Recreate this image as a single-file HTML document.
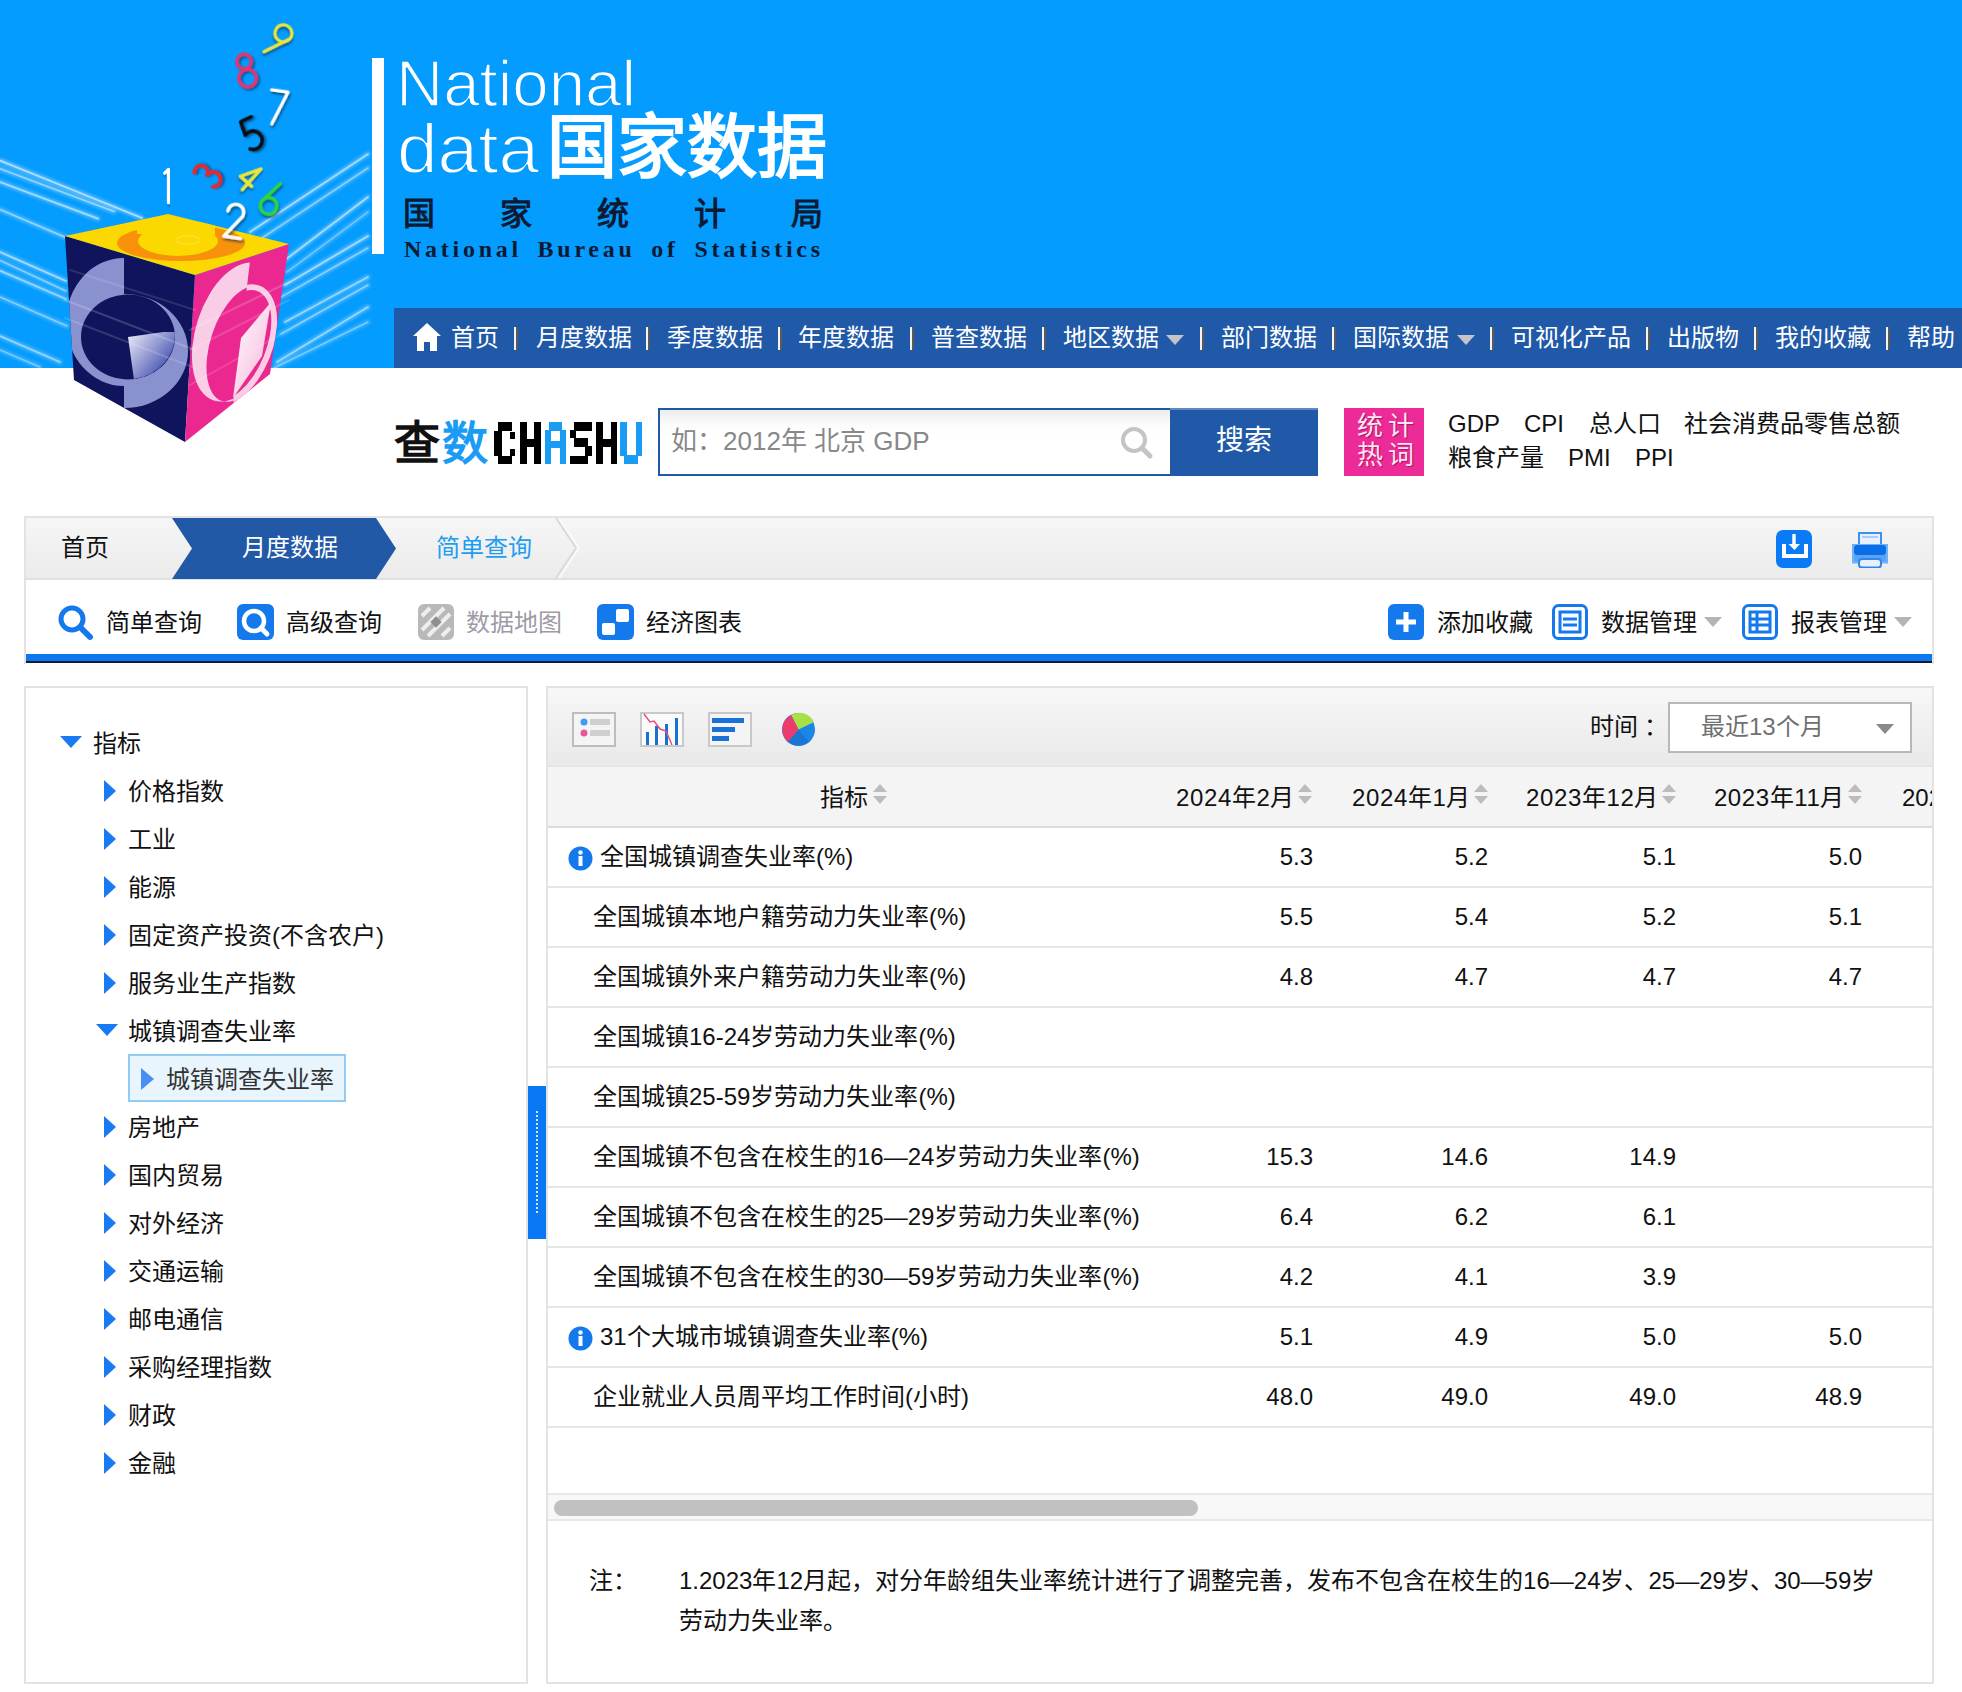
<!DOCTYPE html>
<html lang="zh-CN"><head><meta charset="utf-8">
<style>
*{margin:0;padding:0;box-sizing:border-box}
html,body{width:1962px;height:1692px;overflow:hidden;background:#fff}
body{position:relative;font-family:"Liberation Sans",sans-serif;font-size:24px;color:#000;font-weight:500}
.a{position:absolute;white-space:nowrap}
.t24{font-size:24px;line-height:24px}
#hdr{position:absolute;left:0;top:0;width:1962px;height:368px;background:#049cfe;overflow:hidden}
#nav{position:absolute;left:394px;top:308px;width:1568px;height:60px;background:#2059a8;color:#fff}
#nav .a{top:18px;font-size:24px;line-height:24px}
.sep{position:absolute;top:19px;width:4px;height:23px;background:linear-gradient(90deg,#f4f4f4 0,#f4f4f4 50%,#5a5a5a 50%,#5a5a5a 100%)}
.navtri{position:absolute;top:27px;width:0;height:0;border-left:9px solid transparent;border-right:9px solid transparent;border-top:10px solid #c3c3c8}
.panel{position:absolute;border:2px solid #e2e2e2;background:#fff}
.tri-r{position:absolute;width:0;height:0;border-top:11px solid transparent;border-bottom:11px solid transparent;border-left:12px solid #1a7af3}
.tri-d{position:absolute;width:0;height:0;border-left:11px solid transparent;border-right:11px solid transparent;border-top:12px solid #1a7af3}
.row{position:absolute;left:0;width:1386px;height:60px;border-bottom:2px solid #e6e6e6}
.val{position:absolute;top:18px;font-size:24px;line-height:24px;text-align:right}
.sort{position:absolute;width:15px;height:21px}
.sort:before{content:"";position:absolute;left:0;top:0;border-left:7.5px solid transparent;border-right:7.5px solid transparent;border-bottom:8px solid #bcbcbc}
.sort:after{content:"";position:absolute;left:0;top:12px;border-left:7.5px solid transparent;border-right:7.5px solid transparent;border-top:8px solid #bcbcbc}
</style></head><body>
<div id="hdr">

<div class="a" style="left:372px;top:58px;width:12px;height:196px;background:#fff"></div>
<svg class="a" style="left:390px;top:40px" width="460" height="230" viewBox="390 40 460 230">
 <text x="396" y="106" font-family="Liberation Sans" font-size="64" fill="#fff" stroke="#049cfe" stroke-width="1.6" textLength="240" lengthAdjust="spacingAndGlyphs">National</text>
 <text x="397" y="173" font-family="Liberation Sans" font-size="64" fill="#fff" stroke="#049cfe" stroke-width="1.6" textLength="142" lengthAdjust="spacingAndGlyphs" transform="translate(0 -17.3) scale(1 1.1)">data</text>
 <text x="404" y="257" font-family="Liberation Serif" font-weight="bold" font-size="24" fill="#0d1a33" textLength="416" lengthAdjust="spacing" word-spacing="6">National Bureau of Statistics</text>
</svg>
<div class="a" style="left:547px;top:113px;font-size:70px;line-height:70px;color:#fff;font-weight:bold;letter-spacing:0px">国家数据</div>
<div class="a" style="left:403px;top:198px;font-size:32px;line-height:32px;color:#0d1a33;font-weight:bold;letter-spacing:65px">国家统计局</div>
<div id="nav">
 <svg class="a" style="left:18px;top:14px" width="30" height="30" viewBox="0 0 30 30"><path d="M15 1 L29 14 L25 14 L25 29 L18 29 L18 20 L12 20 L12 29 L5 29 L5 14 L1 14 Z" fill="#fff"/></svg>
 <div class="a" style="left:57px">首页</div>
 <div class="sep" style="left:120px"></div>
 <div class="a" style="left:142px">月度数据</div>
 <div class="sep" style="left:252px"></div>
 <div class="a" style="left:273px">季度数据</div>
 <div class="sep" style="left:384px"></div>
 <div class="a" style="left:404px">年度数据</div>
 <div class="sep" style="left:516px"></div>
 <div class="a" style="left:537px">普查数据</div>
 <div class="sep" style="left:648px"></div>
 <div class="a" style="left:669px">地区数据</div>
 <div class="navtri" style="left:772px"></div>
 <div class="sep" style="left:806px"></div>
 <div class="a" style="left:827px">部门数据</div>
 <div class="sep" style="left:938px"></div>
 <div class="a" style="left:959px">国际数据</div>
 <div class="navtri" style="left:1063px"></div>
 <div class="sep" style="left:1096px"></div>
 <div class="a" style="left:1117px">可视化产品</div>
 <div class="sep" style="left:1252px"></div>
 <div class="a" style="left:1273px">出版物</div>
 <div class="sep" style="left:1360px"></div>
 <div class="a" style="left:1381px">我的收藏</div>
 <div class="sep" style="left:1492px"></div>
 <div class="a" style="left:1513px">帮助</div>
</div>
</div>
<svg class="a" style="left:0;top:0" width="400" height="460" viewBox="0 0 400 460">
 <defs>
  <clipPath id="cl"><polygon points="65,236 195,275 185,442 74,380"/></clipPath>
  <clipPath id="cr"><polygon points="195,275 289,244 270,374 185,442"/></clipPath>
  <clipPath id="ct"><polygon points="65,236 168,214 289,244 195,275"/></clipPath>
  <clipPath id="hl"><rect x="0" y="0" width="124" height="460"/></clipPath>
  <clipPath id="hr"><rect x="124" y="0" width="200" height="460"/></clipPath>
  <clipPath id="pl"><polygon points="150,230 250,230 250,261 233,404 233,460 150,460"/></clipPath>
  <clipPath id="pr"><polygon points="250,230 320,230 320,460 233,460 233,404 250,261"/></clipPath>
  <clipPath id="q4"><rect x="124" y="332" width="60" height="60"/></clipPath>
  <linearGradient id="qg" x1="0" y1="0" x2="1" y2="1"><stop offset="0" stop-color="#e4e4f4"/><stop offset=".45" stop-color="#8e95d0"/><stop offset="1" stop-color="#1b2a9c"/></linearGradient>
  <linearGradient id="dg" x1="0" y1="0" x2="1" y2="1"><stop offset="0" stop-color="#fff"/><stop offset="1" stop-color="#f7b2d8"/></linearGradient>
  <filter id="gl" x="-20%" y="-50%" width="140%" height="200%"><feGaussianBlur stdDeviation="1.6"/></filter>
  <filter id="sh" x="-30%" y="-30%" width="160%" height="160%"><feDropShadow dx="1.5" dy="2" stdDeviation="1.2" flood-color="#002040" flood-opacity=".6"/></filter>
 </defs>
 <g stroke="#dff2ff" stroke-linecap="round" fill="none" filter="url(#gl)">
  <path d="M0 160.6 L142 218" stroke-width="5" opacity="0.39"/>
  <path d="M0 168.7 L114 211.5" stroke-width="5" opacity="0.32"/>
  <path d="M0 182 L98 218.7" stroke-width="5" opacity="0.35"/>
  <path d="M0 209.5 L67 238" stroke-width="5" opacity="0.32"/>
  <path d="M0 252 L66 281" stroke-width="5" opacity="0.35"/>
  <path d="M0 260.5 L66 291" stroke-width="5" opacity="0.28"/>
  <path d="M0 270.7 L66 299" stroke-width="5" opacity="0.32"/>
  <path d="M0 297 L67 326" stroke-width="5" opacity="0.28"/>
  <path d="M0 336 L60 362" stroke-width="5" opacity="0.32"/>
  <path d="M0 350 L40 367" stroke-width="5" opacity="0.24"/>
  <path d="M250 232 L368 154" stroke-width="5" opacity="0.35"/>
  <path d="M259 240 L368 168" stroke-width="5" opacity="0.28"/>
  <path d="M285 260 L368 197" stroke-width="5" opacity="0.35"/>
  <path d="M287 272 L368 212" stroke-width="5" opacity="0.24"/>
  <path d="M285 285 L368 236" stroke-width="5" opacity="0.35"/>
  <path d="M281 297 L368 248" stroke-width="5" opacity="0.28"/>
  <path d="M285 322 L368 277" stroke-width="5" opacity="0.32"/>
  <path d="M281 334 L368 285" stroke-width="5" opacity="0.28"/>
  <path d="M277 362 L368 307" stroke-width="5" opacity="0.32"/>
  <path d="M274 368 L368 322" stroke-width="5" opacity="0.24"/>
 </g>
 <g stroke="#fff" stroke-linecap="round" fill="none">
  <path d="M0 160.6 L142 218" stroke-width="1.8" opacity="0.55"/>
  <path d="M0 168.7 L114 211.5" stroke-width="1.5" opacity="0.45"/>
  <path d="M0 182 L98 218.7" stroke-width="1.8" opacity="0.5"/>
  <path d="M0 209.5 L67 238" stroke-width="1.5" opacity="0.45"/>
  <path d="M0 252 L66 281" stroke-width="1.8" opacity="0.5"/>
  <path d="M0 260.5 L66 291" stroke-width="1.5" opacity="0.4"/>
  <path d="M0 270.7 L66 299" stroke-width="1.8" opacity="0.45"/>
  <path d="M0 297 L67 326" stroke-width="1.5" opacity="0.4"/>
  <path d="M0 336 L60 362" stroke-width="1.8" opacity="0.45"/>
  <path d="M0 350 L40 367" stroke-width="1.5" opacity="0.35"/>
  <path d="M250 232 L368 154" stroke-width="1.8" opacity="0.5"/>
  <path d="M259 240 L368 168" stroke-width="1.5" opacity="0.4"/>
  <path d="M285 260 L368 197" stroke-width="1.8" opacity="0.5"/>
  <path d="M287 272 L368 212" stroke-width="1.5" opacity="0.35"/>
  <path d="M285 285 L368 236" stroke-width="1.8" opacity="0.5"/>
  <path d="M281 297 L368 248" stroke-width="1.5" opacity="0.4"/>
  <path d="M285 322 L368 277" stroke-width="1.8" opacity="0.45"/>
  <path d="M281 334 L368 285" stroke-width="1.5" opacity="0.4"/>
  <path d="M277 362 L368 307" stroke-width="1.8" opacity="0.45"/>
  <path d="M274 368 L368 322" stroke-width="1.5" opacity="0.35"/>
 </g>
 <polygon points="65,236 195,275 185,442 74,380" fill="#0f145c"/>
 <g clip-path="url(#cl)">
  <g clip-path="url(#hl)"><path fill-rule="evenodd" fill="#8a91cf" d="M66 322 A58 64 0 1 0 182 322 A58 64 0 1 0 66 322 Z M81 337 A47 42.5 0 1 0 175 337 A47 42.5 0 1 0 81 337 Z"/></g>
  <g clip-path="url(#hr)"><path fill-rule="evenodd" fill="#8a91cf" d="M60 351 A64 57 0 1 0 188 351 A64 57 0 1 0 60 351 Z M81 337 A47 42.5 0 1 0 175 337 A47 42.5 0 1 0 81 337 Z"/></g>
  <g clip-path="url(#q4)"><path d="M128 337 L175 337 A47 42.5 0 0 1 128 379.5 Z" fill="url(#qg)" transform="rotate(-8 128 337)"/></g>
 </g>
 <polygon points="195,275 289,244 270,374 185,442" fill="#ea2890"/>
 <g clip-path="url(#cr)">
  <g clip-path="url(#pl)"><path fill-rule="evenodd" fill="#f9cde6" d="M196 332 A40 72 0 1 0 276 332 A40 72 0 1 0 196 332 Z M214 342 A30 60 0 1 0 274 342 A30 60 0 1 0 214 342 Z" transform="rotate(18 236 332)"/></g>
  <g clip-path="url(#pr)"><path fill-rule="evenodd" fill="#f9cde6" d="M200 345 A36 64 0 1 0 272 345 A36 64 0 1 0 200 345 Z M206 345 A30 58 0 1 0 266 345 A30 58 0 1 0 206 345 Z" transform="rotate(22 236 345)"/></g>
  <polygon points="241,338 271,302 262,356 233,398" fill="url(#dg)"/>
 </g>
 <polygon points="65,236 168,214 289,244 195,275" fill="#fbd800"/>
 <g clip-path="url(#ct)">
  <ellipse cx="181" cy="243" rx="64" ry="18" fill="#f7920a"/>
  <ellipse cx="178" cy="241" rx="40" ry="15" fill="#fbd800"/>
  <polygon points="137,222 215,222 215,236 137,234" fill="#fbd800"/>
  <ellipse cx="188" cy="240" rx="12" ry="4" fill="none" stroke="#fff27a" stroke-width="1.5" opacity=".35"/>
 </g>
 <g stroke="#fff" stroke-linecap="round" fill="none">
  <path d="M65 300 L195 350" stroke-width="2" opacity="0.18"/>
  <path d="M65 318 L195 368" stroke-width="2" opacity="0.15"/>
  <path d="M190 330 L289 282" stroke-width="2" opacity="0.18"/>
  <path d="M190 350 L289 300" stroke-width="2" opacity="0.15"/>
  <path d="M70 270 L195 310" stroke-width="2" opacity="0.12"/>
  <path d="M190 385 L280 335" stroke-width="2" opacity="0.15"/>
 </g>
 <g transform="translate(278.0 40.5) rotate(40) scale(1.000) translate(-10.5 -18.5)" stroke="#e8e63c" stroke-width="3.20" fill="none" stroke-linecap="round" stroke-linejoin="round" filter="url(#sh)"><circle cx="10" cy="9.5" r="8.5"/><path d="M18 11 L7 36"/></g>
 <g transform="translate(246.5 70.5) rotate(-12) scale(0.976) translate(-10.5 -18.5)" stroke="#e6336f" stroke-width="3.48" fill="none" stroke-linecap="round" stroke-linejoin="round" filter="url(#sh)"><circle cx="10" cy="9" r="7.5"/><circle cx="10" cy="26.5" r="9"/></g>
 <g transform="translate(277.5 107.5) rotate(8) scale(0.976) translate(-10.5 -18.5)" stroke="#ffffff" stroke-width="3.28" fill="none" stroke-linecap="round" stroke-linejoin="round" filter="url(#sh)"><path d="M2 1.5 L19 1.5 L7 36"/></g>
 <g transform="translate(252.5 134.5) rotate(-25) scale(0.976) translate(-10.5 -18.5)" stroke="#0a0a0a" stroke-width="3.69" fill="none" stroke-linecap="round" stroke-linejoin="round" filter="url(#sh)"><path d="M17 1.5 L5 1.5 L3.5 16 A9.5 9.5 0 1 1 2 31"/></g>
 <g transform="translate(168.0 186.0) rotate(0) scale(0.950) translate(-10.5 -18.5)" stroke="#ffffff" stroke-width="3.37" fill="none" stroke-linecap="round" stroke-linejoin="round" filter="url(#sh)"><path d="M7 5 L11 1 L11 36"/></g>
 <g transform="translate(208.0 174.5) rotate(-55) scale(0.881) translate(-10.5 -18.5)" stroke="#e22a36" stroke-width="4.09" fill="none" stroke-linecap="round" stroke-linejoin="round" filter="url(#sh)"><path d="M3 5 A7.5 7.5 0 1 1 9 18 A8.5 8.5 0 1 1 2 31"/></g>
 <g transform="translate(249.5 177.5) rotate(42) scale(0.800) translate(-10.5 -18.5)" stroke="#e8e63c" stroke-width="4.25" fill="none" stroke-linecap="round" stroke-linejoin="round" filter="url(#sh)"><path d="M14 36 L14 1 L1 25 L20 25"/></g>
 <g transform="translate(271.0 198.5) rotate(18) scale(0.976) translate(-10.5 -18.5)" stroke="#2fd43c" stroke-width="3.48" fill="none" stroke-linecap="round" stroke-linejoin="round" filter="url(#sh)"><path d="M15 1 L3.5 22"/><circle cx="10.5" cy="26.5" r="8.5"/></g>
 <g transform="translate(234.5 221.0) rotate(8) scale(1.000) translate(-10.5 -18.5)" stroke="#ffffff" stroke-width="3.40" fill="none" stroke-linecap="round" stroke-linejoin="round" filter="url(#sh)"><path d="M2.5 9.5 A8 8 0 1 1 16 15.5 L2 35 L19 35"/></g>
</svg><div class="a" style="left:394px;top:420px;font-size:46px;line-height:46px;font-weight:900;color:#111">查</div>
<div class="a" style="left:442px;top:420px;font-size:46px;line-height:46px;font-weight:900;color:#1a9cf5">数</div>
<svg class="a" style="left:490px;top:415px" width="160" height="55" viewBox="0 0 160 55">
 <g fill="#000">
  <rect x="8" y="7" width="14" height="9"/><rect x="4" y="16" width="8" height="25"/><rect x="8" y="16" width="4" height="33"/>
  <rect x="20" y="17" width="5" height="7"/><rect x="20" y="34" width="5" height="7"/><rect x="8" y="41" width="14" height="8"/>
  <rect x="30" y="7" width="7" height="42"/><rect x="44" y="7" width="7" height="42"/><rect x="37" y="24" width="7" height="8"/>
  <rect x="84" y="7" width="18" height="9"/><rect x="80" y="15" width="6" height="8"/><rect x="84" y="23" width="14" height="9"/>
  <rect x="95" y="31" width="7" height="10"/><rect x="80" y="41" width="18" height="8"/>
  <rect x="106" y="7" width="7" height="42"/><rect x="121" y="7" width="6" height="42"/><rect x="113" y="24" width="8" height="8"/>
 </g>
 <g fill="#1a9cf5">
  <rect x="59" y="7" width="13" height="9"/><rect x="55" y="15" width="6" height="34"/><rect x="70" y="15" width="6" height="34"/><rect x="61" y="26" width="9" height="7"/>
  <rect x="130" y="7" width="7" height="34"/><rect x="146" y="7" width="6" height="34"/><rect x="134" y="40" width="14" height="9"/>
 </g>
</svg>
<div class="a" style="left:658px;top:408px;width:512px;height:68px;border:2px solid #2059a8;border-right:none;background:linear-gradient(#ececec,#fbfbfb 22%,#fff 40%)"></div>
<div class="a" style="left:671px;top:428px;font-size:26px;line-height:26px;color:#888">如：2012年 北京 GDP</div>
<svg class="a" style="left:1118px;top:424px" width="40" height="36" viewBox="0 0 40 36">
 <circle cx="16" cy="16" r="11" fill="none" stroke="#c4c4c4" stroke-width="4"/>
 <path d="M24 24 L32 32" stroke="#c4c4c4" stroke-width="5" stroke-linecap="round"/>
</svg>
<div class="a" style="left:1170px;top:408px;width:148px;height:68px;background:#2059a8;border-top:2px solid #6088c0"></div>
<div class="a" style="left:1216px;top:427px;font-size:28px;line-height:28px;color:#fff">搜索</div>
<div class="a" style="left:1344px;top:408px;width:80px;height:68px;background:#ed2b98"></div>
<div class="a" style="left:1357px;top:412px;font-size:26px;line-height:29px;color:#ffe6f4;font-weight:normal;letter-spacing:5px;text-shadow:1px 1px 1px rgba(110,0,50,.55)">统计<br>热词</div>
<div class="a" style="left:1448px;top:412px;font-size:24px;line-height:24px;color:#111;word-spacing:0">GDP</div>
<div class="a" style="left:1524px;top:412px;font-size:24px;line-height:24px;color:#111">CPI</div>
<div class="a" style="left:1589px;top:412px;font-size:24px;line-height:24px;color:#111">总人口</div>
<div class="a" style="left:1684px;top:412px;font-size:24px;line-height:24px;color:#111">社会消费品零售总额</div>
<div class="a" style="left:1448px;top:446px;font-size:24px;line-height:24px;color:#111">粮食产量</div>
<div class="a" style="left:1568px;top:446px;font-size:24px;line-height:24px;color:#111">PMI</div>
<div class="a" style="left:1635px;top:446px;font-size:24px;line-height:24px;color:#111">PPI</div>
<div class="a" style="left:24px;top:516px;width:1910px;height:148px;border:2px solid #e3e3e3;border-bottom:none;background:#fff"></div>
<div class="a" style="left:26px;top:518px;width:1906px;height:62px;background:linear-gradient(#f6f6f6,#ebebeb);border-bottom:2px solid #e0e0e0"></div>
<div class="a t24" style="left:61px;top:536px;color:#111">首页</div>
<svg class="a" style="left:170px;top:518px" width="420" height="62" viewBox="170 518 420 62">
 <polygon points="172,518 376,518 396,548.5 376,579 172,579 192,548.5" fill="#2159a7"/>
 <polyline points="559,518 579,548 559,578" fill="none" stroke="#fafafa" stroke-width="2"/>
 <polyline points="556,518 576,548 556,578" fill="none" stroke="#d9d9d9" stroke-width="1.8"/>
</svg>
<div class="a t24" style="left:242px;top:536px;color:#fff">月度数据</div>
<div class="a t24" style="left:436px;top:536px;color:#1e9ef0">简单查询</div>
<svg class="a" style="left:1776px;top:530px" width="36" height="38" viewBox="0 0 36 38">
 <rect x="0" y="0" width="36" height="38" rx="7" fill="#0a7af6"/>
 <path d="M8 14 V26 H30 V14" fill="none" stroke="#fff" stroke-width="4"/>
 <path d="M18 4 V16" fill="none" stroke="#fff" stroke-width="3.4"/>
 <path d="M12.5 14 L18.5 20 L24 14 Z" fill="#fff"/>
</svg>
<svg class="a" style="left:1852px;top:532px" width="36" height="36" viewBox="0 0 36 36">
 <rect x="7" y="1" width="22" height="12" fill="#e6f0ff" stroke="#3d8ef5" stroke-width="2"/>
 <rect x="10" y="4" width="16" height="2" fill="#a9cbf7"/>
 <rect x="0" y="12" width="36" height="19.5" fill="#6fb0fa"/>
 <rect x="2" y="13" width="32" height="10" rx="3" fill="#0a6ee6"/>
 <rect x="2" y="23" width="32" height="6" fill="#5aa2f5"/>
 <rect x="7" y="27" width="22" height="8.5" rx="3" fill="#e6f0ff" stroke="#2f84ee" stroke-width="2"/>
</svg>
<!-- toolbar -->
<svg class="a" style="left:57px;top:604px" width="38" height="37" viewBox="0 0 38 37">
 <circle cx="15" cy="15" r="11" fill="none" stroke="#1479ec" stroke-width="5"/>
 <path d="M23 23 L33 33" stroke="#1479ec" stroke-width="6" stroke-linecap="round"/>
</svg>
<div class="a t24" style="left:106px;top:611px;color:#111">简单查询</div>
<svg class="a" style="left:237px;top:604px" width="37" height="36" viewBox="0 0 37 36">
 <rect x="0" y="0" width="37" height="36" rx="6" fill="#1479ec"/>
 <circle cx="17" cy="17" r="10" fill="none" stroke="#fff" stroke-width="4.5"/>
 <path d="M24 24 L30 30" stroke="#fff" stroke-width="5" stroke-linecap="round"/>
</svg>
<div class="a t24" style="left:286px;top:611px;color:#111">高级查询</div>
<svg class="a" style="left:418px;top:604px" width="36" height="36" viewBox="0 0 36 36">
 <rect x="0" y="0" width="36" height="36" rx="6" fill="#b9b9b9"/>
 <path d="M4 12 L12 4 M4 26 L26 4 M10 32 L32 10 M24 32 L32 24" stroke="#eeeeee" stroke-width="4"/>
 <rect x="14" y="14" width="8" height="8" fill="#8f8f8f" transform="rotate(45 18 18)"/>
</svg>
<div class="a t24" style="left:466px;top:611px;color:#9e9aa6">数据地图</div>
<svg class="a" style="left:597px;top:604px" width="37" height="36" viewBox="0 0 37 36">
 <rect x="0" y="0" width="37" height="36" rx="6" fill="#1479ec"/>
 <rect x="5" y="19" width="13" height="12" rx="2" fill="#fff"/>
 <rect x="19" y="5" width="13" height="13" rx="2" fill="#fff"/>
</svg>
<div class="a t24" style="left:646px;top:611px;color:#111">经济图表</div>
<svg class="a" style="left:1388px;top:604px" width="36" height="36" viewBox="0 0 36 36">
 <rect x="0" y="0" width="36" height="36" rx="6" fill="#1479ec"/>
 <path d="M18 8 V28 M8 18 H28" stroke="#fff" stroke-width="5"/>
</svg>
<div class="a t24" style="left:1437px;top:611px;color:#111">添加收藏</div>
<svg class="a" style="left:1552px;top:604px" width="36" height="36" viewBox="0 0 36 36">
 <rect x="1.5" y="1.5" width="33" height="33" rx="5" fill="#fff" stroke="#1479ec" stroke-width="3"/>
 <rect x="8" y="8" width="20" height="20" fill="none" stroke="#1479ec" stroke-width="3"/>
 <path d="M11 15 H25 M11 21 H25" stroke="#1479ec" stroke-width="3"/>
</svg>
<div class="a t24" style="left:1601px;top:611px;color:#111">数据管理</div>
<div class="a" style="left:1704px;top:617px;width:0;height:0;border-left:9px solid transparent;border-right:9px solid transparent;border-top:10px solid #b4b4b4"></div>
<svg class="a" style="left:1742px;top:604px" width="36" height="36" viewBox="0 0 36 36">
 <rect x="1.5" y="1.5" width="33" height="33" rx="5" fill="#fff" stroke="#1479ec" stroke-width="3"/>
 <rect x="8" y="8" width="20" height="20" fill="none" stroke="#1479ec" stroke-width="3"/>
 <path d="M8 15 H28 M8 21 H28 M15 8 V28" stroke="#1479ec" stroke-width="3"/>
</svg>
<div class="a t24" style="left:1791px;top:611px;color:#111">报表管理</div>
<div class="a" style="left:1894px;top:617px;width:0;height:0;border-left:9px solid transparent;border-right:9px solid transparent;border-top:10px solid #b4b4b4"></div>
<div class="a" style="left:26px;top:654px;width:1906px;height:7px;background:#0c78ef"></div>
<div class="a" style="left:26px;top:661px;width:1906px;height:2px;background:#0e1a30"></div>
<div class="a" style="left:24px;top:686px;width:504px;height:998px;border:2px solid #e3e3e3;background:#fff"></div>
<div class="tri-d" style="left:60px;top:736px;border-left-width:11px;border-right-width:11px;border-top-width:12px"></div>
<div class="a t24" style="left:93px;top:732px;color:#111">指标</div>
<div class="tri-r" style="left:104px;top:780px"></div>
<div class="a t24" style="left:128px;top:780px;color:#111">价格指数</div>
<div class="tri-r" style="left:104px;top:828px"></div>
<div class="a t24" style="left:128px;top:828px;color:#111">工业</div>
<div class="tri-r" style="left:104px;top:876px"></div>
<div class="a t24" style="left:128px;top:876px;color:#111">能源</div>
<div class="tri-r" style="left:104px;top:924px"></div>
<div class="a t24" style="left:128px;top:924px;color:#111">固定资产投资(不含农户)</div>
<div class="tri-r" style="left:104px;top:972px"></div>
<div class="a t24" style="left:128px;top:972px;color:#111">服务业生产指数</div>
<div class="tri-d" style="left:96px;top:1024px"></div>
<div class="a t24" style="left:128px;top:1020px;color:#111">城镇调查失业率</div>
<div class="a" style="left:128px;top:1054px;width:218px;height:48px;background:#e9f5fd;border:2px solid #93cbf3"></div>
<div class="tri-r" style="left:141px;top:1068px;border-left-color:#4a8ff0;border-top-width:11px;border-bottom-width:11px;border-left-width:13px"></div>
<div class="a t24" style="left:166px;top:1068px;color:#333">城镇调查失业率</div>
<div class="tri-r" style="left:104px;top:1116px"></div>
<div class="a t24" style="left:128px;top:1116px;color:#111">房地产</div>
<div class="tri-r" style="left:104px;top:1164px"></div>
<div class="a t24" style="left:128px;top:1164px;color:#111">国内贸易</div>
<div class="tri-r" style="left:104px;top:1212px"></div>
<div class="a t24" style="left:128px;top:1212px;color:#111">对外经济</div>
<div class="tri-r" style="left:104px;top:1260px"></div>
<div class="a t24" style="left:128px;top:1260px;color:#111">交通运输</div>
<div class="tri-r" style="left:104px;top:1308px"></div>
<div class="a t24" style="left:128px;top:1308px;color:#111">邮电通信</div>
<div class="tri-r" style="left:104px;top:1356px"></div>
<div class="a t24" style="left:128px;top:1356px;color:#111">采购经理指数</div>
<div class="tri-r" style="left:104px;top:1404px"></div>
<div class="a t24" style="left:128px;top:1404px;color:#111">财政</div>
<div class="tri-r" style="left:104px;top:1452px"></div>
<div class="a t24" style="left:128px;top:1452px;color:#111">金融</div>
<div class="a" style="left:528px;top:1086px;width:18px;height:153px;background:#0a78f5"></div>
<div class="a" style="left:536px;top:1111px;width:2px;height:104px;background:repeating-linear-gradient(#cfe4ff 0 2px,transparent 2px 4px)"></div>
<div class="a" style="left:546px;top:686px;width:1388px;height:998px;border:2px solid #e3e3e3;background:#fff;overflow:hidden">
<div class="a" style="left:0;top:0;width:1384px;height:79px;background:linear-gradient(#f7f7f7,#e9e9e9);border-bottom:1px solid #e2e2e2"></div>
<svg class="a" style="left:24px;top:24px" width="44" height="35" viewBox="0 0 44 35">
<rect x="1" y="1" width="42" height="33" fill="#f4f4f4" stroke="#bdbdbd" stroke-width="2"/>
<circle cx="12" cy="10" r="3.5" fill="#3f9bf5"/><rect x="18" y="7" width="20" height="6" fill="#cfcfcf"/>
<circle cx="12" cy="21" r="3.5" fill="#e8559a"/><rect x="18" y="18" width="20" height="6" fill="#cfcfcf"/>
</svg>
<svg class="a" style="left:92px;top:24px" width="44" height="35" viewBox="0 0 44 35">
<rect x="1" y="1" width="42" height="33" fill="#fafafa" stroke="#c8c8c8" stroke-width="2"/>
<rect x="6" y="20" width="3" height="13" fill="#1a6fd0"/><rect x="15" y="14" width="3" height="19" fill="#1a6fd0"/>
<rect x="25" y="12" width="3" height="21" fill="#1a6fd0"/><rect x="35" y="6" width="3" height="27" fill="#1a6fd0"/>
<path d="M4 2 L10 10 L14 9 L20 17 L26 19 L32 33" fill="none" stroke="#e8507a" stroke-width="1.5"/>
</svg>
<svg class="a" style="left:160px;top:24px" width="44" height="35" viewBox="0 0 44 35">
<rect x="1" y="1" width="42" height="33" fill="#f4f4f4" stroke="#c8c8c8" stroke-width="2"/>
<rect x="4" y="6" width="32" height="5" fill="#1a72d6"/><rect x="4" y="15" width="23" height="5" fill="#1a72d6"/><rect x="4" y="24" width="17" height="5" fill="#1a72d6"/>
</svg>
<svg class="a" style="left:233px;top:24px" width="35" height="35" viewBox="0 0 35 35">
<circle cx="17.5" cy="17.5" r="16.5" fill="#1a86e6"/>
<path d="M17.5 17.5 L33 10 A16.5 16.5 0 0 0 10 3 Z" fill="#a8e04a"/>
<path d="M17.5 17.5 L10 3 A16.5 16.5 0 0 0 7 30 Z" fill="#ec3c6e"/>
<path d="M7 30 A16.5 16.5 0 0 0 28 30 L17.5 17.5 Z" fill="#1a5cb0" opacity=".35"/>
</svg>
<div class="a t24" style="left:1042px;top:27px;color:#111">时间<span style="margin-left:6px">：</span></div>
<div class="a" style="left:1120px;top:14px;width:244px;height:51px;border:2px solid #b8b8b8;background:#fff"></div>
<div class="a t24" style="left:1153px;top:27px;color:#707070">最近13个月</div>
<div class="a" style="left:1328px;top:36px;width:0;height:0;border-left:9.5px solid transparent;border-right:9.5px solid transparent;border-top:10px solid #8a8a8a"></div>
<div class="a" style="left:0;top:79px;width:1384px;height:61px;background:#f4f4f4;border-bottom:2px solid #dcdcdc"></div>
<div class="a t24" style="left:272px;top:98px;color:#111">指标</div>
<div class="sort" style="left:325px;top:96px"></div>
<div class="a t24" style="right:637px;top:98px;color:#111;letter-spacing:0.6px">2024年2月</div>
<div class="sort" style="left:750px;top:96px"></div>
<div class="a t24" style="right:461px;top:98px;color:#111;letter-spacing:0.6px">2024年1月</div>
<div class="sort" style="left:926px;top:96px"></div>
<div class="a t24" style="right:273px;top:98px;color:#111;letter-spacing:0.6px">2023年12月</div>
<div class="sort" style="left:1114px;top:96px"></div>
<div class="a t24" style="right:87px;top:98px;color:#111;letter-spacing:0.6px">2023年11月</div>
<div class="sort" style="left:1300px;top:96px"></div>
<div class="a t24" style="left:1354px;top:98px;color:#111">2023年10月</div>
<svg class="a" style="left:20px;top:158px" width="25" height="25" viewBox="0 0 25 25"><circle cx="12.5" cy="12.5" r="12" fill="#1479ec"/><circle cx="12.5" cy="6.5" r="2.2" fill="#fff"/><rect x="10.5" y="10" width="4" height="10" fill="#fff"/></svg>
<div class="a t24" style="left:52px;top:157px;color:#111">全国城镇调查失业率(%)</div>
<div class="a t24" style="right:619px;top:157px;color:#111">5.3</div>
<div class="a t24" style="right:444px;top:157px;color:#111">5.2</div>
<div class="a t24" style="right:256px;top:157px;color:#111">5.1</div>
<div class="a t24" style="right:70px;top:157px;color:#111">5.0</div>
<div class="a" style="left:0;top:198px;width:1384px;height:2px;background:#e6e6e6"></div>
<div class="a t24" style="left:45px;top:217px;color:#111">全国城镇本地户籍劳动力失业率(%)</div>
<div class="a t24" style="right:619px;top:217px;color:#111">5.5</div>
<div class="a t24" style="right:444px;top:217px;color:#111">5.4</div>
<div class="a t24" style="right:256px;top:217px;color:#111">5.2</div>
<div class="a t24" style="right:70px;top:217px;color:#111">5.1</div>
<div class="a" style="left:0;top:258px;width:1384px;height:2px;background:#e6e6e6"></div>
<div class="a t24" style="left:45px;top:277px;color:#111">全国城镇外来户籍劳动力失业率(%)</div>
<div class="a t24" style="right:619px;top:277px;color:#111">4.8</div>
<div class="a t24" style="right:444px;top:277px;color:#111">4.7</div>
<div class="a t24" style="right:256px;top:277px;color:#111">4.7</div>
<div class="a t24" style="right:70px;top:277px;color:#111">4.7</div>
<div class="a" style="left:0;top:318px;width:1384px;height:2px;background:#e6e6e6"></div>
<div class="a t24" style="left:45px;top:337px;color:#111">全国城镇16-24岁劳动力失业率(%)</div>
<div class="a" style="left:0;top:378px;width:1384px;height:2px;background:#e6e6e6"></div>
<div class="a t24" style="left:45px;top:397px;color:#111">全国城镇25-59岁劳动力失业率(%)</div>
<div class="a" style="left:0;top:438px;width:1384px;height:2px;background:#e6e6e6"></div>
<div class="a t24" style="left:45px;top:457px;color:#111">全国城镇不包含在校生的16—24岁劳动力失业率(%)</div>
<div class="a t24" style="right:619px;top:457px;color:#111">15.3</div>
<div class="a t24" style="right:444px;top:457px;color:#111">14.6</div>
<div class="a t24" style="right:256px;top:457px;color:#111">14.9</div>
<div class="a" style="left:0;top:498px;width:1384px;height:2px;background:#e6e6e6"></div>
<div class="a t24" style="left:45px;top:517px;color:#111">全国城镇不包含在校生的25—29岁劳动力失业率(%)</div>
<div class="a t24" style="right:619px;top:517px;color:#111">6.4</div>
<div class="a t24" style="right:444px;top:517px;color:#111">6.2</div>
<div class="a t24" style="right:256px;top:517px;color:#111">6.1</div>
<div class="a" style="left:0;top:558px;width:1384px;height:2px;background:#e6e6e6"></div>
<div class="a t24" style="left:45px;top:577px;color:#111">全国城镇不包含在校生的30—59岁劳动力失业率(%)</div>
<div class="a t24" style="right:619px;top:577px;color:#111">4.2</div>
<div class="a t24" style="right:444px;top:577px;color:#111">4.1</div>
<div class="a t24" style="right:256px;top:577px;color:#111">3.9</div>
<div class="a" style="left:0;top:618px;width:1384px;height:2px;background:#e6e6e6"></div>
<svg class="a" style="left:20px;top:638px" width="25" height="25" viewBox="0 0 25 25"><circle cx="12.5" cy="12.5" r="12" fill="#1479ec"/><circle cx="12.5" cy="6.5" r="2.2" fill="#fff"/><rect x="10.5" y="10" width="4" height="10" fill="#fff"/></svg>
<div class="a t24" style="left:52px;top:637px;color:#111">31个大城市城镇调查失业率(%)</div>
<div class="a t24" style="right:619px;top:637px;color:#111">5.1</div>
<div class="a t24" style="right:444px;top:637px;color:#111">4.9</div>
<div class="a t24" style="right:256px;top:637px;color:#111">5.0</div>
<div class="a t24" style="right:70px;top:637px;color:#111">5.0</div>
<div class="a" style="left:0;top:678px;width:1384px;height:2px;background:#e6e6e6"></div>
<div class="a t24" style="left:45px;top:697px;color:#111">企业就业人员周平均工作时间(小时)</div>
<div class="a t24" style="right:619px;top:697px;color:#111">48.0</div>
<div class="a t24" style="right:444px;top:697px;color:#111">49.0</div>
<div class="a t24" style="right:256px;top:697px;color:#111">49.0</div>
<div class="a t24" style="right:70px;top:697px;color:#111">48.9</div>
<div class="a" style="left:0;top:738px;width:1384px;height:2px;background:#e6e6e6"></div>
<div class="a" style="left:0;top:805px;width:1384px;height:28px;background:#f8f8f8;border-top:2px solid #e8e8e8;border-bottom:2px solid #e8e8e8"></div>
<div class="a" style="left:6px;top:812px;width:644px;height:16px;border-radius:8px;background:#c1c1c1"></div>
<div class="a t24" style="left:41px;top:881px;color:#111">注：</div>
<div class="a" style="left:131px;top:873px;font-size:24px;line-height:40px;color:#111;white-space:nowrap">1.2023年12月起，对分年龄组失业率统计进行了调整完善，发布不包含在校生的16—24岁、25—29岁、30—59岁<br>劳动力失业率。</div>
</div></body></html>
